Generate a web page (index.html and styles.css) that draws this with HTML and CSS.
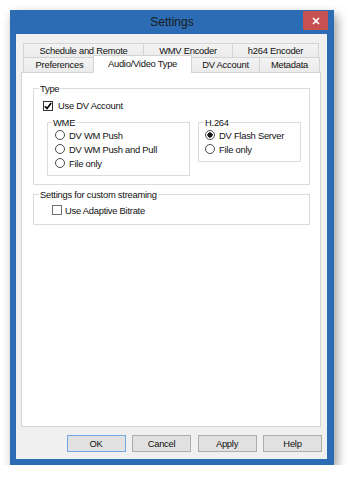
FILE: index.html
```html
<!DOCTYPE html>
<html>
  <head>
    <link rel="stylesheet" href="styles.css">
  </head>
  <body>
    <div class="window">
      <div class="titlebar">
        <span></span>
        <span class="title">Settings</span>
        <span class="close">
          <svg width="8" height="8" viewBox="0 0 8 8"><path d="M1 1 L7 7 M7 1 L1 7" stroke="#fff" stroke-width="1.7"/></svg>
        </span>
      </div>

      <div class="client">
        <div class="tabs">
          <div class="tabrow row1">
            <div class="tab t-sched">Schedule and Remote</div>
            <div class="tab t-wmv">WMV Encoder</div>
            <div class="tab t-h264">h264 Encoder</div>
          </div>
          <div class="tabrow row2">
            <div class="tab t-pref">Preferences</div>
            <div class="tab sel">Audio/Video Type</div>
            <div class="tab t-dv">DV Account</div>
            <div class="tab t-meta">Metadata</div>
          </div>
        </div>

        <div class="page">
          <fieldset class="group type">
            <legend>Type</legend>
            <label class="check">
              <span class="box on">
                <svg width="8" height="8" viewBox="0 0 8 8"><path d="M0.8 4.2 L3 6.6 L7.2 1" fill="none" stroke="#000" stroke-width="1.6"/></svg>
              </span>
              Use DV Account
            </label>
            <div class="subgroups">
              <fieldset class="group wme">
                <legend>WME</legend>
                <label class="radio"><span class="dot"></span>DV WM Push</label>
                <label class="radio"><span class="dot"></span>DV WM Push and Pull</label>
                <label class="radio"><span class="dot"></span>File only</label>
              </fieldset>
              <fieldset class="group h264">
                <legend>H.264</legend>
                <label class="radio"><span class="dot on"></span>DV Flash Server</label>
                <label class="radio"><span class="dot"></span>File only</label>
              </fieldset>
            </div>
          </fieldset>

          <fieldset class="group custom">
            <legend>Settings for custom streaming</legend>
            <label class="check"><span class="box"></span>Use Adaptive Bitrate</label>
          </fieldset>
        </div>

        <div class="buttons">
          <button class="btn default">OK</button>
          <button class="btn">Cancel</button>
          <button class="btn">Apply</button>
          <button class="btn">Help</button>
        </div>
      </div>
    </div>
  </body>
</html>
```

FILE: styles.css
```css
body {
  margin: 0;
  background: #fff;
  font-family: "Liberation Sans", Arial, sans-serif;
  font-size: 9.4px;
  letter-spacing: -0.25px;
  color: #111;
}

.window {
  margin: 10px 0 0 10px;
  width: 324px;
  height: 455px;
  background: #2b6cb4;
  box-shadow: 3px 5px 10px rgba(0, 0, 0, 0.4);
  display: flex;
  flex-direction: column;
}

.titlebar {
  height: 24px;
  display: grid;
  grid-template-columns: 1fr auto 1fr;
  align-items: center;
}

.title {
  font-size: 12px;
  letter-spacing: 0;
  color: #1a1a1a;
}

.close {
  justify-self: end;
  align-self: start;
  width: 25px;
  height: 19px;
  margin: 1px 6px 0 0;
  background: #c75050;
  display: flex;
  align-items: center;
  justify-content: center;
}

.client {
  flex: 1;
  margin: 0 7px 6px 6px;
  background: #f0f0f0;
  padding: 9px 0 0 5px;
}

/* tabs */
.tabs {
  width: 300px;
  padding-left: 2px;
  box-sizing: border-box;
}

.tabrow {
  display: flex;
}

.row1 {
  height: 14px;
}

.row2 {
  height: 15px;
}

.tab {
  box-sizing: border-box;
  border: 1px solid #d4d4d4;
  border-bottom: none;
  margin-right: -1px;
  background: linear-gradient(#f3f3f3, #ebebeb);
  text-align: center;
  line-height: 13px;
  white-space: nowrap;
}

.row2 .tab {
  line-height: 14px;
}

.t-sched { width: 121px; }
.t-wmv { width: 90px; }
.t-h264 { width: 87px; }
.t-pref { width: 73px; }
.t-dv { width: 69px; }
.t-meta { width: 61px; }

.row2 .tab.sel {
  width: 99px;
  height: 18px;
  margin: -2px -1px -1px -2px;
  background: #fff;
  line-height: 16px;
  position: relative;
  z-index: 1;
}

/* tab page */
.page {
  width: 300px;
  height: 355px;
  box-sizing: border-box;
  background: #fff;
  border: 1px solid #d4d4d4;
  padding: 10px 10px 0 11px;
}

fieldset {
  margin: 0;
  padding: 0;
  border: 1px solid #dcdcdc;
  min-width: 0;
}

legend {
  padding: 0 1px;
  line-height: 11px;
  margin-left: 5px;
}

.type {
  padding-bottom: 8px;
}

.check {
  display: flex;
  align-items: center;
  gap: 5px;
  height: 11px;
  margin: 6px 0 0 9px;
}

.box {
  width: 10px;
  height: 10px;
  box-sizing: border-box;
  border: 1px solid #707070;
  background: #fff;
  display: flex;
  align-items: center;
  justify-content: center;
}

.box.on {
  border-color: #333;
}

.subgroups {
  display: flex;
  align-items: flex-start;
  gap: 8px;
  margin: 6px 0 0 13px;
}

.wme {
  width: 143px;
  box-sizing: border-box;
  padding: 0 0 5px 7px;
}

.wme legend {
  margin-left: -3px;
}

.h264 {
  width: 103px;
  box-sizing: border-box;
  padding: 0 0 5px 6px;
}

.h264 legend {
  margin-left: -1px;
}

.radio {
  display: flex;
  align-items: center;
  gap: 4px;
  height: 14px;
}

.dot {
  width: 10px;
  height: 10px;
  box-sizing: border-box;
  border: 1px solid #4d4d4d;
  border-radius: 50%;
  background: #fff;
}

.dot.on {
  background: radial-gradient(circle, #1a1a1a 0 2.4px, #fff 2.9px);
}

.custom {
  margin-top: 4px;
}

.custom .check {
  height: 14px;
  margin: 3px 0 7px 18px;
  gap: 3px;
}

/* bottom buttons */
.buttons {
  display: flex;
  justify-content: flex-end;
  gap: 6.5px;
  margin-top: 8px;
  padding-right: 5px;
}

.btn {
  width: 59px;
  height: 17px;
  padding: 0;
  border: 1px solid #adadad;
  background: #e1e1e1;
  font-family: inherit;
  font-size: 9.4px;
  letter-spacing: -0.25px;
  color: #111;
}

.btn.default {
  border-color: #6ea7e2;
}
```
